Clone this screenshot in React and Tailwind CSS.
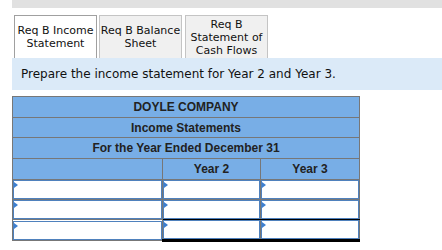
const tabs = [
  { label: 'Req B Income Statement', active: true },
  { label: 'Req B Balance Sheet' },
  { label: 'Req B Statement of Cash Flows' },
];

function Marker() {
  return (
    <span className="absolute left-0 top-[1px] w-0 h-0 border-y-[3px] border-y-transparent border-l-[4px] border-l-[#3d7fd0]" />
  );
}

function InputCell({ year, row }) {
  let edge = '';
  if (year && row === 1) edge = 'border-b-black';
  if (year && row === 2) edge = 'border-t-black border-b-[3px] border-b-black';
  return (
    <td className={`p-0 border border-[#777] ${edge}`}>
      <div className="relative h-[19px] border border-[#4f81bd] bg-white">
        <Marker />
      </div>
    </td>
  );
}

export default function App() {
  const rows = [0, 1, 2];

  return (
    <div className="w-[442px] h-[250px] bg-white pl-3 overflow-hidden" style={{ fontFamily: "'DejaVu Sans', Verdana, sans-serif" }}>
      <div className="h-2 bg-[#e1e1e1]" />

      {/* tabs */}
      <div className="flex items-end gap-[2px] mt-[7px] ml-[2px]">
        {tabs.map((t, i) => (
          <div
            key={i}
            className={`w-[83px] h-[43px] flex items-center justify-center text-center text-[11px] leading-[13px] text-[#111] border ${
              t.active ? 'bg-white border-[#a0a0a0] border-b-0' : 'bg-[#f0f0f0] border-[#c4c4c4] border-b-0'
            } ${i === 2 ? 'ml-[1px]' : ''}`}
          >
            {t.label}
          </div>
        ))}
      </div>

      <div className="h-8 bg-[#dbeaf8] flex items-center pl-[9px] text-[12px] text-[#111]">
        Prepare the income statement for Year 2 and Year 3.
      </div>

      {/* statement table */}
      <table
        className="mt-[6px] w-[347px] border-collapse border border-[#777] table-fixed"
        style={{ fontFamily: "'Liberation Sans', Arial, sans-serif" }}
      >
        <colgroup>
          <col className="w-[150px]" />
          <col className="w-[98px]" />
          <col className="w-[99px]" />
        </colgroup>
        <tbody className="text-[12px] font-bold text-[#222]">
          <tr className="h-[21px] bg-[#78aee6]">
            <td colSpan={3} className="border border-[#777] text-center p-0">DOYLE COMPANY</td>
          </tr>
          <tr className="h-[20px] bg-[#78aee6]">
            <td colSpan={3} className="border border-[#777] text-center p-0">Income Statements</td>
          </tr>
          <tr className="h-[21px] bg-[#78aee6]">
            <td colSpan={3} className="border border-[#777] text-center p-0">For the Year Ended December 31</td>
          </tr>
          <tr className="h-[21px] bg-[#78aee6]">
            <td className="border border-[#777] p-0" />
            <td className="border border-[#777] text-center p-0">Year 2</td>
            <td className="border border-[#777] text-center p-0">Year 3</td>
          </tr>
          {rows.map((r) => (
            <tr key={r}>
              <InputCell row={r} />
              <InputCell year row={r} />
              <InputCell year row={r} />
            </tr>
          ))}
        </tbody>
      </table>
    </div>
  );
}
